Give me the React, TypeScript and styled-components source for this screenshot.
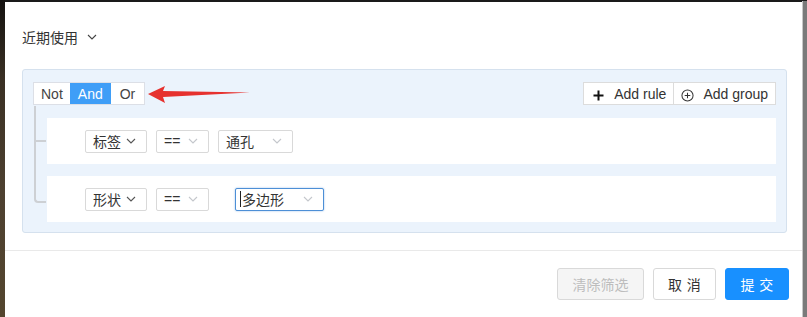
import * as React from 'react';
import styled, { createGlobalStyle } from 'styled-components';

const FONT = `"Liberation Sans", "Noto Sans CJK SC", Arial, sans-serif`;

const GlobalStyle = createGlobalStyle`
  html, body {
    margin: 0;
    padding: 0;
    background: #7d7d7d;
  }
  body {
    font-family: ${FONT};
    font-size: 14px;
    color: #333;
  }
`;

const Screen = styled.div`
  display: flex;
  width: 807px;
  height: 317px;
  overflow: hidden;
  background: #1a1a1a;
`;

const Backdrop = styled.div`
  width: 5px;
  flex: none;
  background: linear-gradient(#141210 0%, #3a3024 25%, #4d4030 60%, #54462f 100%);
`;

const EdgeRight = styled.div`
  width: 4px;
  flex: none;
  margin-top: 1px;
  background: #7a7a7a;
  border-left: 1px solid #c8c8c8;
`;

const Modal = styled.div`
  flex: 1;
  margin-top: 2px;
  background: #fff;
  display: flex;
  flex-direction: column;
`;

const Body = styled.div`
  padding: 25px 15px 17px 17px;
  border-bottom: 1px solid #e9e9e9;
`;

const Recent = styled.div`
  display: flex;
  align-items: center;
  gap: 9px;
  height: 20px;
  font-size: 14px;
  color: #333;
`;

const Group = styled.div`
  margin-top: 22px;
  background: #ebf3fc;
  border: 1px solid #d5e1ee;
  border-radius: 3px;
  padding: 12px 10px 10px 10px;
`;

const GroupHeader = styled.div`
  display: flex;
  align-items: center;
  height: 23px;
`;

const Segmented = styled.div`
  display: flex;
  border: 1px solid #dcdfe6;
  background: #fff;
  height: 23px;
  box-sizing: border-box;
`;

const SegButton = styled.div<{ $active?: boolean; $pad: number }>`
  display: flex;
  align-items: center;
  padding: 0 ${(p) => p.$pad}px;
  font-size: 14px;
  background: ${(p) => (p.$active ? '#3f9ef7' : '#fff')};
  color: ${(p) => (p.$active ? '#fff' : '#444')};
`;

const Spacer = styled.div`
  flex: 1;
`;

const Actions = styled.div`
  display: flex;
  border: 1px solid #dcdcdc;
  background: #fff;
  height: 23px;
  box-sizing: border-box;
`;

const ActionButton = styled.div`
  display: flex;
  align-items: center;
  gap: 10px;
  padding: 0 7px 0 9px;
  font-size: 14px;
  color: #333;
  & + & {
    border-left: 1px solid #dcdcdc;
    padding-left: 7px;
    gap: 9px;
  }
`;

const Rules = styled.div`
  display: flex;
  flex-direction: column;
  gap: 12px;
  margin: 13px 0 0 14px;
`;

const Rule = styled.div`
  position: relative;
  display: flex;
  align-items: center;
  gap: 9px;
  background: #fff;
  height: 46px;
  padding: 0 0 0 38px;
  box-sizing: border-box;

  &::before {
    content: '';
    position: absolute;
    left: -13px;
    top: -12px;
    width: 12px;
    height: calc(50% + 13px);
    border-left: 2px solid #cdd0d4;
    border-bottom: 2px solid #cdd0d4;
    box-sizing: border-box;
  }
  &:not(:last-child)::after {
    content: '';
    position: absolute;
    left: -13px;
    top: 50%;
    height: calc(50% + 2px);
    border-left: 2px solid #cdd0d4;
  }
  &:last-child::before {
    height: calc(50% + 16px);
    border-bottom-left-radius: 4px;
  }
`;

const Select = styled.div<{ $width: number; $focus?: boolean }>`
  display: flex;
  align-items: center;
  justify-content: space-between;
  width: ${(p) => p.$width}px;
  height: 23px;
  box-sizing: border-box;
  padding: 0 10px 0 ${(p) => (p.$focus ? '4px' : '7px')};
  border: 1px solid ${(p) => (p.$focus ? '#4d8fd6' : '#d9d9d9')};
  box-shadow: ${(p) => (p.$focus ? '0 0 2px rgba(77,143,214,0.6)' : 'none')};
  border-radius: 2px;
  background: #fff;
  font-size: 14px;
  color: #333;
`;

const SelectText = styled.span`
  display: flex;
  align-items: center;
`;

const Caret = styled.span`
  display: inline-block;
  width: 1px;
  height: 16px;
  background: #222;
  margin-right: 1px;
`;

const Footer = styled.div`
  display: flex;
  justify-content: flex-end;
  gap: 9px;
  padding: 17px 13px 0 0;
`;

const Button = styled.div<{ $kind: 'disabled' | 'default' | 'primary'; $width: number }>`
  display: flex;
  align-items: center;
  justify-content: center;
  width: ${(p) => p.$width}px;
  height: 32px;
  box-sizing: border-box;
  border-radius: 3px;
  font-size: 14px;
  border: 1px solid
    ${(p) => (p.$kind === 'primary' ? '#1890ff' : '#d9d9d9')};
  background: ${(p) =>
    p.$kind === 'primary' ? '#1890ff' : p.$kind === 'disabled' ? '#f5f5f5' : '#fff'};
  color: ${(p) =>
    p.$kind === 'primary' ? '#fff' : p.$kind === 'disabled' ? '#bdbdbd' : '#333'};
  letter-spacing: ${(p) => (p.$kind === 'disabled' ? '0' : '0.34em')};
  text-indent: ${(p) => (p.$kind === 'disabled' ? '0' : '0.34em')};
`;

const Chevron = ({ color = '#555', w = 10 }: { color?: string; w?: number }) => (
  <svg width={w} height="6" viewBox="0 0 10 6" fill="none">
    <polyline points="1,1 5,5 9,1" stroke={color} strokeWidth="1.1" />
  </svg>
);

const Arrow = () => (
  <svg width="104" height="20" viewBox="0 0 104 20" style={{ marginLeft: 2, marginTop: 2 }}>
    <polygon points="1,9 18,1 16,6 103,7.5 16,12 18,18" fill="#e6312e" />
  </svg>
);

const PlusIcon = () => (
  <svg width="11" height="11" viewBox="0 0 11 11" style={{ marginTop: 4 }}>
    <path d="M5.5 0.5v10M0.5 5.5h10" stroke="#111" strokeWidth="2" />
  </svg>
);

const CirclePlusIcon = () => (
  <svg width="13" height="13" viewBox="0 0 14 14" style={{ marginTop: 4 }}>
    <circle cx="7" cy="7" r="6" stroke="#333" strokeWidth="1.1" fill="none" />
    <path d="M7 4v6M4 7h6" stroke="#333" strokeWidth="1.1" />
  </svg>
);

const rules = [
  { field: '标签', value: '通孔', valueWidth: 75, gap: 0, focus: false },
  { field: '形状', value: '多边形', valueWidth: 89, gap: 17, focus: true },
];

export default function App() {
  return (
    <>
      <GlobalStyle />
      <Screen>
        <Backdrop />
        <Modal>
          <Body>
            <Recent>
              近期使用 <Chevron color="#444" />
            </Recent>
            <Group>
              <GroupHeader>
                <Segmented>
                  <SegButton $pad={7}>Not</SegButton>
                  <SegButton $pad={8} $active>And</SegButton>
                  <SegButton $pad={9}>Or</SegButton>
                </Segmented>
                <Arrow />
                <Spacer />
                <Actions>
                  <ActionButton>
                    <PlusIcon />
                    Add rule
                  </ActionButton>
                  <ActionButton>
                    <CirclePlusIcon />
                    Add group
                  </ActionButton>
                </Actions>
              </GroupHeader>
              <Rules>
                {rules.map((r) => (
                  <Rule key={r.field}>
                    <Select $width={62}>
                      <SelectText>{r.field}</SelectText>
                      <Chevron color="#555" />
                    </Select>
                    <Select $width={53}>
                      <SelectText>==</SelectText>
                      <Chevron color="#c4c7cc" />
                    </Select>
                    <Select
                      $width={r.valueWidth}
                      $focus={r.focus}
                      style={{ marginLeft: r.gap }}
                    >
                      <SelectText>
                        {r.focus && <Caret />}
                        {r.value}
                      </SelectText>
                      <Chevron color="#c4c7cc" />
                    </Select>
                  </Rule>
                ))}
              </Rules>
            </Group>
          </Body>
          <Footer>
            <Button $kind="disabled" $width={87}>清除筛选</Button>
            <Button $kind="default" $width={63}>取消</Button>
            <Button $kind="primary" $width={64}>提交</Button>
          </Footer>
        </Modal>
        <EdgeRight />
      </Screen>
    </>
  );
}
